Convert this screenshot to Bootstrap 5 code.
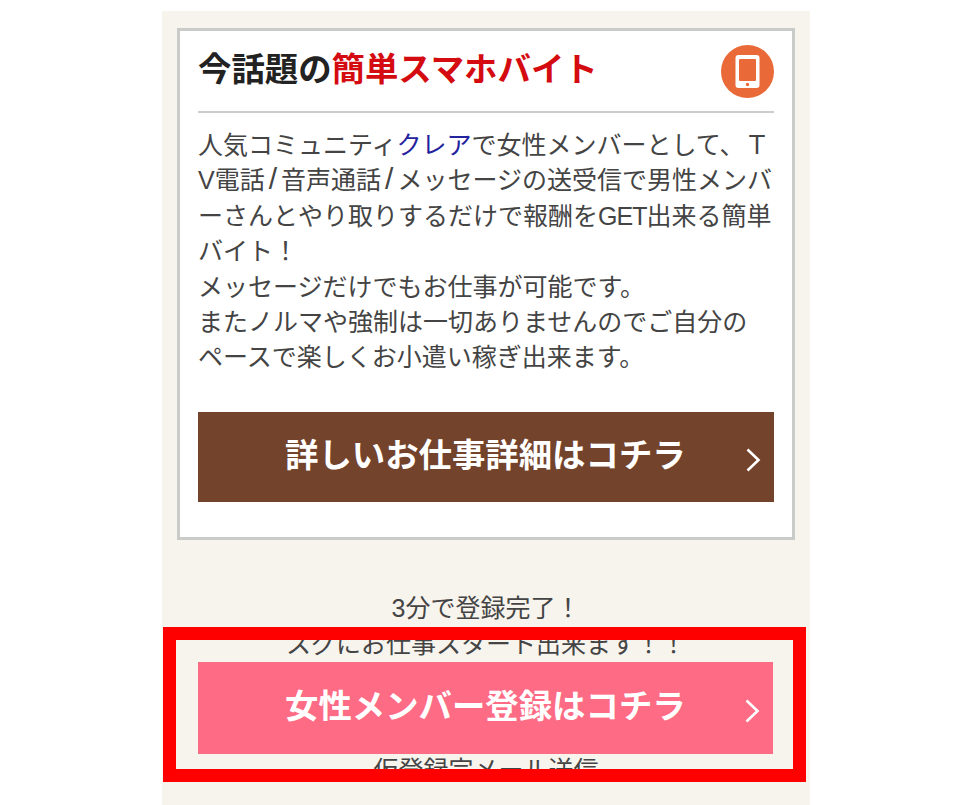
<!DOCTYPE html>
<html lang="ja">
<head>
<meta charset="utf-8">
<title>今話題の簡単スマホバイト</title>
<link href="https://cdn.jsdelivr.net/npm/bootstrap@5.3.0/dist/css/bootstrap.min.css" rel="stylesheet">
<style>
html, body { height: 805px; overflow: hidden; }
body { background: #fff; font-family: "Liberation Sans", "Noto Sans CJK JP", sans-serif; color: #444; text-spacing-trim: space-all; }
.sheet { position: relative; width: 648px; height: 794px; margin: 11px 0 0 162px; padding: 17px 15px 0; background: #f7f3ed; overflow: hidden; }
.job-box { height: 512px; padding: 15px 18px 0 18px; background: #fff; border: 3px solid #c9cbc9; }
.job-head { height: 67px; border-bottom: 2px solid #ccc; }
.job-title { margin: 0; font-size: 33.4px; line-height: 48px; font-weight: 700; color: #222; white-space: nowrap; }
.job-title em { font-style: normal; color: #d40b10; }
.phone-badge { width: 53px; height: 53px; flex: none; margin-top: -1px; }
.job-text { margin: 15px 0 0; font-size: 25px; line-height: 35.4px; white-space: nowrap; }
.job-text .brand-word { color: #2323a0; }
.job-text .wide-slash { padding: 0 4px; font-size: 30px; line-height: 0; }
.job-text .tight-latin { letter-spacing: -1px; }
.cta { height: 90px; padding-left: 87px; padding-right: 13px; font-size: 33.4px; font-weight: 700; color: #fff; text-decoration: none; white-space: nowrap; }
.cta span { margin-top: -2px; }
.cta svg { margin-left: auto; margin-top: 6px; width: 16px; height: 26px; flex: none; }
.cta-brown { margin-top: 36px; background: #73432c; }
.steps { margin: 50px 0 0; font-size: 25px; line-height: 36px; text-align: center; }
.steps p { margin: 0; }
.step-gap { height: 90px; }
.red-frame { position: absolute; left: 1px; top: 616px; width: 643px; height: 155px; padding: 22px 20px 0 22px; border: 13px solid #f00; }
.cta-pink { height: 92px; background: #fd6b85; }
</style>
</head>
<body>
<main class="sheet">
  <section class="job-box">
    <div class="job-head d-flex justify-content-between align-items-start">
      <h2 class="job-title">今話題の<em>簡単スマホバイト</em></h2>
      <svg class="phone-badge" viewBox="0 0 53 53" aria-hidden="true">
        <circle cx="26.5" cy="26.5" r="26.5" fill="#e96a38"/>
        <rect x="14.5" y="10" width="24" height="33" rx="3" fill="#fff"/>
        <rect x="18" y="14" width="17" height="22" rx="1" fill="#e96a38"/>
        <circle cx="26.5" cy="39.5" r="1.7" fill="#e96a38"/>
      </svg>
    </div>
    <p class="job-text">人気コミュニティ<span class="brand-word">クレア</span>で女性メンバーとして、&#xFF34;<br>V電話<span class="wide-slash">/</span>音声通話<span class="wide-slash">/</span>メッセージの送受信で男性メンバ<br>ーさんとやり取りするだけで報酬を<span class="tight-latin">GET</span>出来る簡単<br>バイト&#xFF01;<br>メッセージだけでもお仕事が可能です。<br>またノルマや強制は一切ありませんのでご自分の<br>ペースで楽しくお小遣い稼ぎ出来ます。</p>
    <a href="#" class="cta cta-brown d-flex align-items-center">
      <span>詳しいお仕事詳細はコチラ</span>
      <svg viewBox="0 0 16 26" aria-hidden="true"><path d="M2.5 2.5 13.5 13 2.5 23.5" fill="none" stroke="#fff" stroke-width="2.6"/></svg>
    </a>
  </section>
  <div class="steps">
    <p>3分で登録完了&#xFF01;</p>
    <p>スグにお仕事スタート出来ます&#xFF01;&#xFF01;</p>
    <div class="step-gap"></div>
    <p>仮登録完メール送信</p>
  </div>
  <div class="red-frame">
    <a href="#" class="cta cta-pink d-flex align-items-center">
      <span>女性メンバー登録はコチラ</span>
      <svg viewBox="0 0 16 26" aria-hidden="true"><path d="M2.5 2.5 13.5 13 2.5 23.5" fill="none" stroke="#fff" stroke-width="2.6"/></svg>
    </a>
  </div>
</main>
<script src="https://cdn.jsdelivr.net/npm/bootstrap@5.3.0/dist/js/bootstrap.bundle.min.js"></script>
</body>
</html>
